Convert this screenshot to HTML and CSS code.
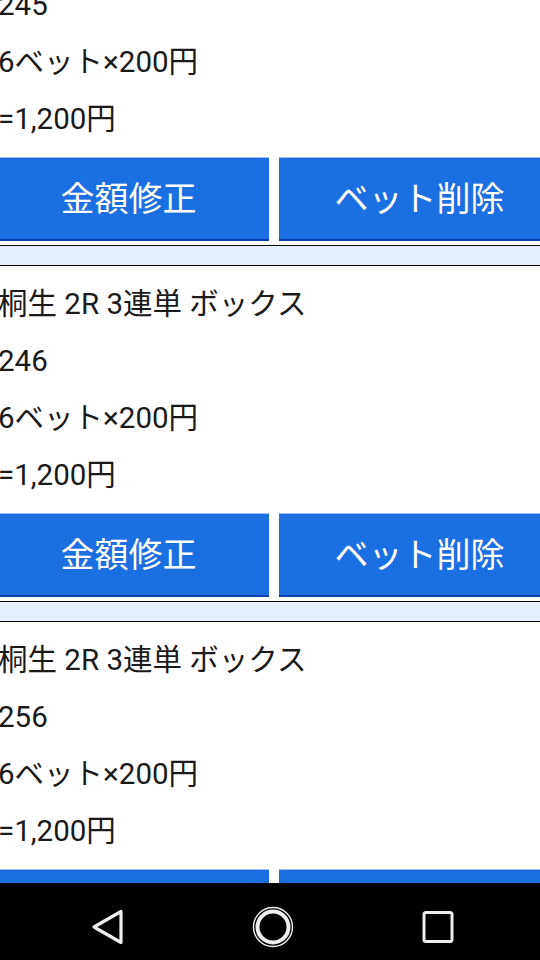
FILE: index.html
```html
<!DOCTYPE html>
<html lang="ja">
<head>
<meta charset="utf-8">
<title>ベット一覧</title>
<link rel="stylesheet" href="styles.css">
</head>
<body>
<div class="screen">
  <div class="list">
    <div class="card">
      <div class="row">桐生 2R 3連単 ボックス</div>
      <div class="row">245</div>
      <div class="row">6ベット×200円</div>
      <div class="row">=1,200円</div>
      <div class="actions">
        <button class="btn">金額修正</button>
        <button class="btn">ベット削除</button>
      </div>
    </div>
    <div class="sep"></div>
    <div class="card">
      <div class="row">桐生 2R 3連単 ボックス</div>
      <div class="row">246</div>
      <div class="row">6ベット×200円</div>
      <div class="row">=1,200円</div>
      <div class="actions">
        <button class="btn">金額修正</button>
        <button class="btn">ベット削除</button>
      </div>
    </div>
    <div class="sep"></div>
    <div class="card">
      <div class="row">桐生 2R 3連単 ボックス</div>
      <div class="row">256</div>
      <div class="row">6ベット×200円</div>
      <div class="row">=1,200円</div>
      <div class="actions">
        <button class="btn">金額修正</button>
        <button class="btn">ベット削除</button>
      </div>
    </div>
  </div>
</div>
<div class="nav">
  <svg class="nav-icon" width="40" height="40" viewBox="0 0 40 40">
    <path d="M6 20 L33 4.5 L33 35.5 Z" fill="none" stroke="#eeeeee" stroke-width="3.2" stroke-linejoin="round"/>
  </svg>
  <svg class="nav-icon" width="42" height="42" viewBox="0 0 42 42">
    <circle cx="21" cy="21" r="19.5" fill="none" stroke="#eeeeee" stroke-width="1.4"/>
    <circle cx="21" cy="21" r="15.5" fill="none" stroke="#eeeeee" stroke-width="4"/>
  </svg>
  <svg class="nav-icon" width="40" height="40" viewBox="0 0 40 40">
    <rect x="6" y="5.5" width="28" height="29" rx="2" fill="none" stroke="#eeeeee" stroke-width="3"/>
  </svg>
</div>
</body>
</html>
```
FILE: styles.css
```css
html, body {
  margin: 0;
  padding: 0;
}
body {
  width: 540px;
  height: 960px;
  display: flex;
  flex-direction: column;
  background: #ffffff;
  font-family: Roboto, "Noto Sans CJK JP", sans-serif;
  overflow: hidden;
}
.screen {
  flex: 1;
  overflow: hidden;
  background: #ffffff;
}
.list {
  width: 572px;
  margin-top: -90px;
  margin-left: -12px;
}
.card {
  padding-top: 10px;
}
.row {
  height: 57px;
  line-height: 57px;
  padding-left: 10px;
  font-size: 29.5px;
  color: #1a1a1a;
  white-space: nowrap;
}
.actions {
  display: grid;
  grid-template-columns: 281px 281px;
  gap: 10px;
  margin-top: 9px;
  margin-bottom: 4px;
}
.btn {
  height: 84px;
  margin: 0;
  padding: 0 0 4px 0;
  border: none;
  border-top: 1px solid #9cbdf0;
  border-bottom: 2px solid #0d3fae;
  background: #1c6fe0;
  color: #ffffff;
  font-family: Roboto, "Noto Sans CJK JP", sans-serif;
  font-size: 34px;
  text-align: center;
}
.sep {
  height: 19px;
  background: #e4f1fc;
  border-top: 1px solid #000000;
  border-bottom: 1px solid #000000;
}
.nav {
  height: 77px;
  background: #000000;
  display: flex;
  align-items: center;
  justify-content: center;
  gap: 124px;
  padding-left: 6px;
  padding-top: 10px;
  box-sizing: border-box;
}
.nav-icon {
  display: block;
}
```
